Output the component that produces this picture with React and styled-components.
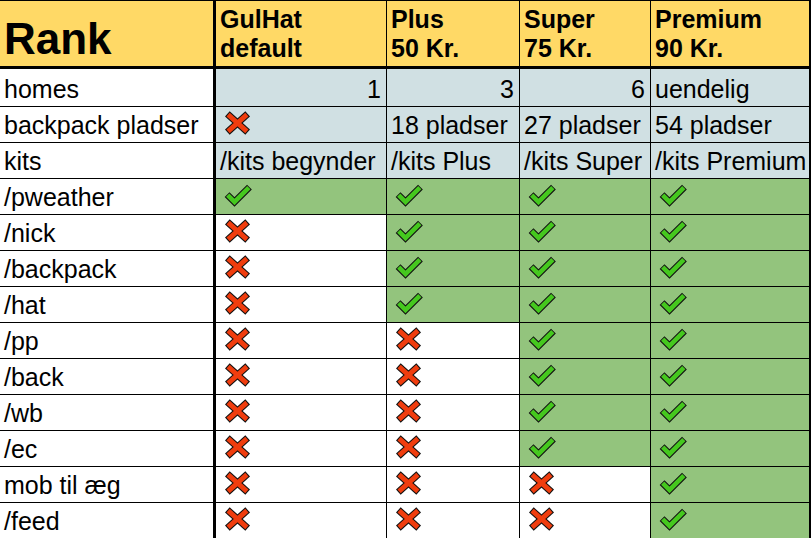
import React from "react";
import styled, { createGlobalStyle, css } from "styled-components";

const GlobalStyle = createGlobalStyle`
  html, body { margin: 0; padding: 0; background: #ffffff; }
  body { font-family: "Liberation Sans", Arial, sans-serif; color: #000; }
`;

const Sheet = styled.div`
  display: grid;
  grid-template-columns: 216px 171px 133px 131px 160px;
  grid-template-rows: 69px 38px repeat(12, 36px);
  width: 811px;
  font-family: "Liberation Sans", Arial, sans-serif;
`;

const Cell = styled.div`
  box-sizing: border-box;
  display: flex;
  align-items: flex-end;
  justify-content: ${(p) => (p.$right ? "flex-end" : "flex-start")};
  padding: 0 5px 2px 4px;
  background: ${(p) => p.$bg || "#ffffff"};
  border-bottom: 1px solid #000;
  border-right: ${(p) => (p.$first ? "3px" : p.$last ? "2px" : "1px")} solid #000;
  font-size: 25px;
  line-height: 29px;
  white-space: nowrap;
  overflow: visible;
  ${(p) =>
    p.$icon &&
    css`
      align-items: center;
      padding-left: 8px;
      padding-bottom: 3px;
    `}
`;

const HeadCell = styled(Cell)`
  background: #ffd966;
  border-top: 1px solid #000;
  border-bottom: 3px solid #000;
  font-weight: 700;
  line-height: 28.5px;
  padding-bottom: 4px;
`;

const RankCell = styled(HeadCell)`
  font-size: 44px;
  line-height: 50px;
  padding-left: 4px;
  padding-bottom: 2px;
`;

const Stack = styled.div`
  display: flex;
  flex-direction: column;
`;

const CrossIcon = () => (
  <svg width="27" height="24" viewBox="0 0 27 24" aria-hidden="true">
    <g stroke="#111" strokeWidth="7" strokeLinecap="butt">
      <line x1="3.33" y1="2.9" x2="23.67" y2="21.1" />
      <line x1="23.67" y1="2.9" x2="3.33" y2="21.1" />
    </g>
    <g stroke="#f03d0e" strokeWidth="4.8" strokeLinecap="butt">
      <line x1="4.1" y1="3.6" x2="22.9" y2="20.4" />
      <line x1="22.9" y1="3.6" x2="4.1" y2="20.4" />
    </g>
  </svg>
);

const CheckIcon = () => (
  <svg width="29" height="23" viewBox="0 0 29 23" aria-hidden="true">
    <polyline
      points="3.06,10.56 10.5,18 25.44,3.06"
      fill="none"
      stroke="#111"
      strokeWidth="6.8"
      strokeLinejoin="miter"
      strokeLinecap="butt"
    />
    <polyline
      points="3.7,11.2 10.5,18 24.8,3.7"
      fill="none"
      stroke="#45c81e"
      strokeWidth="4.6"
      strokeLinejoin="miter"
      strokeLinecap="butt"
    />
  </svg>
);

const BLUE = "#d0e0e3";
const GREEN = "#93c47d";

const headers = [
  ["GulHat", "default"],
  ["Plus", "50 Kr."],
  ["Super", "75 Kr."],
  ["Premium", "90 Kr."],
];

const rows = [
  ["homes", [{ t: "1", r: true }, { t: "3", r: true }, { t: "6", r: true }, { t: "uendelig" }], "info"],
  ["backpack pladser", ["x", { t: "18 pladser" }, { t: "27 pladser" }, { t: "54 pladser" }], "info"],
  ["kits", [{ t: "/kits begynder" }, { t: "/kits Plus" }, { t: "/kits Super" }, { t: "/kits Premium" }], "info"],
  ["/pweather", ["v", "v", "v", "v"]],
  ["/nick", ["x", "v", "v", "v"]],
  ["/backpack", ["x", "v", "v", "v"]],
  ["/hat", ["x", "v", "v", "v"]],
  ["/pp", ["x", "x", "v", "v"]],
  ["/back", ["x", "x", "v", "v"]],
  ["/wb", ["x", "x", "v", "v"]],
  ["/ec", ["x", "x", "v", "v"]],
  ["mob til æg", ["x", "x", "x", "v"]],
  ["/feed", ["x", "x", "x", "v"]],
];

export default function App() {
  return (
    <>
      <GlobalStyle />
      <Sheet>
        <RankCell $first>Rank</RankCell>
        {headers.map((h, i) => (
          <HeadCell key={h[0]} $last={i === headers.length - 1}>
            <Stack>
              <span>{h[0]}</span>
              <span>{h[1]}</span>
            </Stack>
          </HeadCell>
        ))}
        {rows.map(([label, vals, kind]) => (
          <React.Fragment key={label}>
            <Cell $first>{label}</Cell>
            {vals.map((v, i) => {
              const last = i === vals.length - 1;
              if (v === "x") {
                return (
                  <Cell key={i} $icon $last={last} $bg={kind === "info" ? BLUE : undefined}>
                    <CrossIcon />
                  </Cell>
                );
              }
              if (v === "v") {
                return (
                  <Cell key={i} $icon $last={last} $bg={GREEN}>
                    <CheckIcon />
                  </Cell>
                );
              }
              return (
                <Cell key={i} $last={last} $right={v.r} $bg={BLUE}>
                  {v.t}
                </Cell>
              );
            })}
          </React.Fragment>
        ))}
      </Sheet>
    </>
  );
}
